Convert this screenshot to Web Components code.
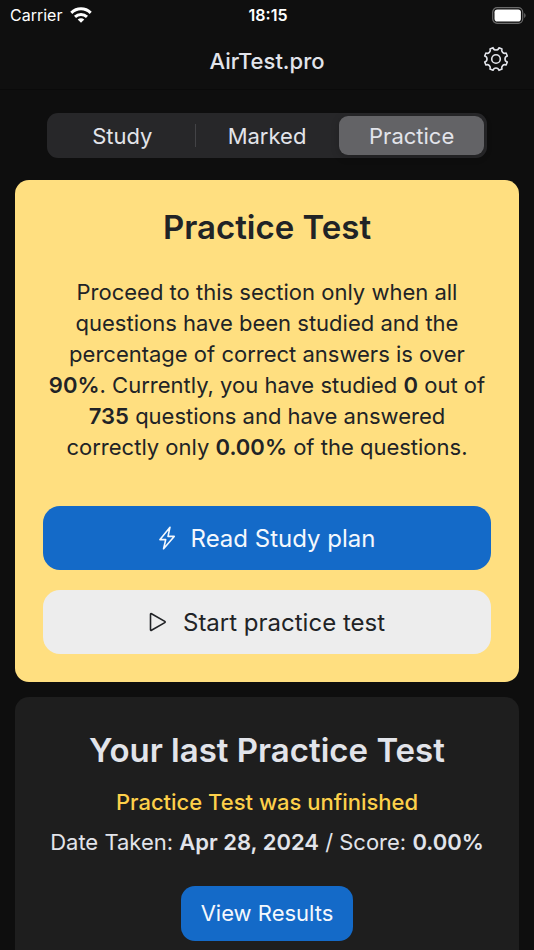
<!DOCTYPE html>
<html lang="en">
<head>
<meta charset="utf-8">
<meta name="viewport" content="width=device-width, initial-scale=1">
<title>AirTest.pro</title>
<style>
    html {
        background: #0e0e0e;
        scrollbar-width: none;
    }
    body {
        margin: 0;
        color: #e2e4ea;
        font-family: Inter, "Liberation Sans", sans-serif;
        font-size: 22px;
        line-height: 31px;
    }
    .yellow {
        --card-bg: #ffdf80;
        --card-color: #212326;
    }
    b {
        font-weight: 600;
    }
    main {
        display: flex;
        flex-direction: column;
        gap: 15px;
        padding: 23px 15px 15px;
    }
    segment-control {
        margin: 0 32px 7px;
    }
</style>
</head>
<body>
    <status-bar carrier="Carrier" time="18:15"></status-bar>
    <app-header>AirTest.pro</app-header>
    <main>
        <segment-control options="Study,Marked,Practice" selected="Practice"></segment-control>
        <info-card class="yellow">
            <span slot="title">Practice Test</span>
            Proceed to this section only when all questions have been studied and the percentage of correct answers is over <b>90%</b>. Currently, you have studied <b>0</b> out of <b>735</b> questions and have answered correctly only <b>0.00%</b> of the questions.
            <app-button slot="actions" icon="bolt">Read Study plan</app-button>
            <app-button slot="actions" icon="play" variant="light">Start practice test</app-button>
        </info-card>
        <last-result date="Apr 28, 2024" score="0.00%">Practice Test was unfinished</last-result>
    </main>

<script>
    const icons = {
        bolt: `<svg width="16" height="24" viewBox="0 0 16 24" stroke-width="1.6">
            <path d="M11 1.200 1 13.600h5.700L4.600 22.800 15.200 10.400H9Z"/></svg>`,
        play: `<svg width="18" height="20" viewBox="0 0 18 20" stroke-width="1.6">
            <path d="M1.500 2.300v15.400c0 .6.5.9 1 .6l13.300-7.700c.5-.3.5-.9 0-1.200L2.500 1.700c-.5-.3-1 0-1 .6Z"/></svg>`,
        gear: `<svg width="26" height="26" viewBox="-13 -13 26 26" stroke-width="1.6">
            <path d="M-3-11.300A3.100 3.100 0 0 0 3-11.300L6-10.100A3.100 3.100 0 0 0 10.100-6L11.300-3A3.100 3.100 0 0 0 11.300 3L10.100 6A3.100 3.100 0 0 0 6 10.100L3 11.300A3.100 3.100 0 0 0-3 11.300L-6 10.100A3.100 3.100 0 0 0-10.100 6L-11.300 3A3.100 3.100 0 0 0-11.300-3L-10.100-6A3.100 3.100 0 0 0-6-10.100Z"/>
            <circle r="4.300"/></svg>`
    };

    class StatusBar extends HTMLElement {
        constructor() {
            super();
            this.attachShadow({ mode: 'open' });
        }

        connectedCallback() {
            this.shadowRoot.innerHTML = `
                <style>
                    :host {
                        display: grid;
                        grid-template-columns: 1fr auto 1fr;
                        align-items: center;
                        height: 30px;
                        padding: 0 8px 0 10px;
                        background: #0f0f0f;
                        color: #fff;
                        font-size: 16px;
                        line-height: 20px;
                    }
                    .carrier {
                        display: flex;
                        align-items: center;
                        gap: 8px;
                    }
                    .time {
                        font-weight: 600;
                    }
                    .battery {
                        justify-self: end;
                    }
                    svg {
                        display: block;
                    }
                </style>
                <div class="carrier">
                    <span>${this.getAttribute('carrier')}</span>
                    <svg width="22" height="16" viewBox="0 0 22 16" fill="none" stroke="#fff" stroke-width="3">
                        <path d="M1.300 5.800C6.800.5 15.200.5 20.700 5.800"/>
                        <path d="M5 9.800C8.400 6.600 13.600 6.600 17 9.800"/>
                        <path d="M11 15.800 7.700 12.500C9.600 10.800 12.400 10.800 14.300 12.500Z" fill="#fff" stroke="none"/>
                    </svg>
                </div>
                <div class="time">${this.getAttribute('time')}</div>
                <svg class="battery" width="34" height="17" viewBox="0 0 34 17">
                    <rect x=".7" y=".7" width="30" height="15.600" rx="4.500" fill="none" stroke="#6b6b6b" stroke-width="1.200"/>
                    <rect x="2.500" y="2.500" width="26.400" height="12" rx="2.800" fill="#fff"/>
                    <path d="M32.200 6v5c1.800-.8 1.800-4.200 0-5Z" fill="#6b6b6b"/>
                </svg>
            `;
        }
    }

    class AppHeader extends HTMLElement {
        constructor() {
            super();
            this.attachShadow({ mode: 'open' });
        }

        connectedCallback() {
            this.shadowRoot.innerHTML = `
                <style>
                    :host {
                        display: grid;
                        grid-template-columns: 1fr auto 1fr;
                        align-items: start;
                        padding: 16px 25px 12px;
                        background: #0f0f0f;
                        border-bottom: 1px solid #0a0a0a;
                    }
                    h1 {
                        grid-column: 2;
                        margin: 0;
                        font-size: 22px;
                        font-weight: 500;
                    }
                    button {
                        justify-self: end;
                        padding: 0;
                        border: none;
                        background: none;
                        color: inherit;
                        cursor: pointer;
                    }
                    svg {
                        display: block;
                        fill: none;
                        stroke: currentColor;
                        stroke-linejoin: round;
                    }
                </style>
                <h1><slot></slot></h1>
                <button type="button" aria-label="Settings">${icons.gear}</button>
            `;
        }
    }

    class SegmentControl extends HTMLElement {
        constructor() {
            super();
            this.attachShadow({ mode: 'open' });
        }

        connectedCallback() {
            const selected = this.getAttribute('selected');
            const options = this.getAttribute('options').split(',');

            this.shadowRoot.innerHTML = `
                <style>
                    :host {
                        display: block;
                    }
                    .segments {
                        display: grid;
                        grid-auto-flow: column;
                        grid-auto-columns: 1fr;
                        padding: 3px;
                        border-radius: 11px;
                        background: #272729;
                    }
                    label {
                        position: relative;
                        padding: 5px 0 3px;
                        border-radius: 9px;
                        text-align: center;
                        cursor: pointer;
                    }
                    label:has(input:checked) {
                        background: #636366;
                        box-shadow: 0 2px 8px rgba(0,0,0,0.2);
                    }
                    /* divider, only between two unselected segments */
                    label:not(:has(input:checked)) + label:not(:has(input:checked))::before {
                        content: '';
                        position: absolute;
                        left: 0;
                        top: 8px;
                        bottom: 8px;
                        width: 1px;
                        background: #434346;
                    }
                    input {
                        position: absolute;
                        inset: 0;
                        margin: 0;
                        opacity: 0;
                    }
                </style>
                <div class="segments" role="radiogroup">
                    ${options.map((name) => `
                        <label><input type="radio" name="section" value="${name}" ${name === selected ? 'checked' : ''}>${name}</label>
                    `).join('')}
                </div>
            `;
        }
    }

    class InfoCard extends HTMLElement {
        constructor() {
            super();
            this.attachShadow({ mode: 'open' });
            this.shadowRoot.innerHTML = `
                <style>
                    :host {
                        display: block;
                        padding: 28px;
                        border-radius: 14px;
                        background: var(--card-bg, #1e1e1e);
                        color: var(--card-color, inherit);
                        text-align: center;
                    }
                    h2 {
                        margin: 0 0 31px;
                        font-size: 33px;
                        line-height: 38px;
                        font-weight: 600;
                    }
                    p {
                        margin: 0;
                    }
                    .actions {
                        display: flex;
                        flex-direction: column;
                        gap: 20px;
                        margin-top: 43px;
                    }
                </style>
                <h2><slot name="title"></slot></h2>
                <p><slot></slot></p>
                <div class="actions"><slot name="actions"></slot></div>
            `;
        }
    }

    class AppButton extends HTMLElement {
        constructor() {
            super();
            this.attachShadow({ mode: 'open' });
        }

        connectedCallback() {
            const icon = icons[this.getAttribute('icon')] || '';

            this.shadowRoot.innerHTML = `
                <style>
                    :host {
                        display: block;
                    }
                    button {
                        display: flex;
                        align-items: center;
                        justify-content: center;
                        gap: 16px;
                        width: 100%;
                        min-height: 64px;
                        padding: 0 20px;
                        border: none;
                        border-radius: 17px;
                        background: #146ac8;
                        color: #f4f8fd;
                        font: inherit;
                        font-size: 24px;
                        cursor: pointer;
                    }
                    :host([variant="light"]) button {
                        background: #ededed;
                        color: #212326;
                    }
                    :host([size="small"]) button {
                        min-height: 55px;
                        border-radius: 14px;
                        font-size: 22px;
                    }
                    svg {
                        flex: none;
                        fill: none;
                        stroke: currentColor;
                        stroke-linejoin: round;
                    }
                </style>
                <button type="button">${icon}<slot></slot></button>
            `;
        }
    }

    class LastResult extends HTMLElement {
        constructor() {
            super();
            this.attachShadow({ mode: 'open' });
        }

        connectedCallback() {
            this.shadowRoot.innerHTML = `
                <style>
                    :host {
                        display: flex;
                        flex-direction: column;
                        align-items: center;
                        padding: 34px 20px 28px;
                        border-radius: 14px;
                        background: #1e1e1e;
                        text-align: center;
                    }
                    h2 {
                        margin: 0 0 18px;
                        font-size: 33px;
                        line-height: 38px;
                        font-weight: 600;
                    }
                    p {
                        margin: 0 0 9px;
                    }
                    .status {
                        color: #fdd04a;
                        font-weight: 500;
                    }
                    b {
                        font-weight: 600;
                    }
                    app-button {
                        margin-top: 19px;
                    }
                </style>
                <h2>Your last Practice Test</h2>
                <p class="status"><slot></slot></p>
                <p>Date Taken: <b>${this.getAttribute('date')}</b> / Score: <b>${this.getAttribute('score')}</b></p>
                <app-button size="small">View Results</app-button>
            `;
        }
    }

    customElements.define('status-bar', StatusBar);
    customElements.define('app-header', AppHeader);
    customElements.define('segment-control', SegmentControl);
    customElements.define('info-card', InfoCard);
    customElements.define('app-button', AppButton);
    customElements.define('last-result', LastResult);
</script>
</body>
</html>
